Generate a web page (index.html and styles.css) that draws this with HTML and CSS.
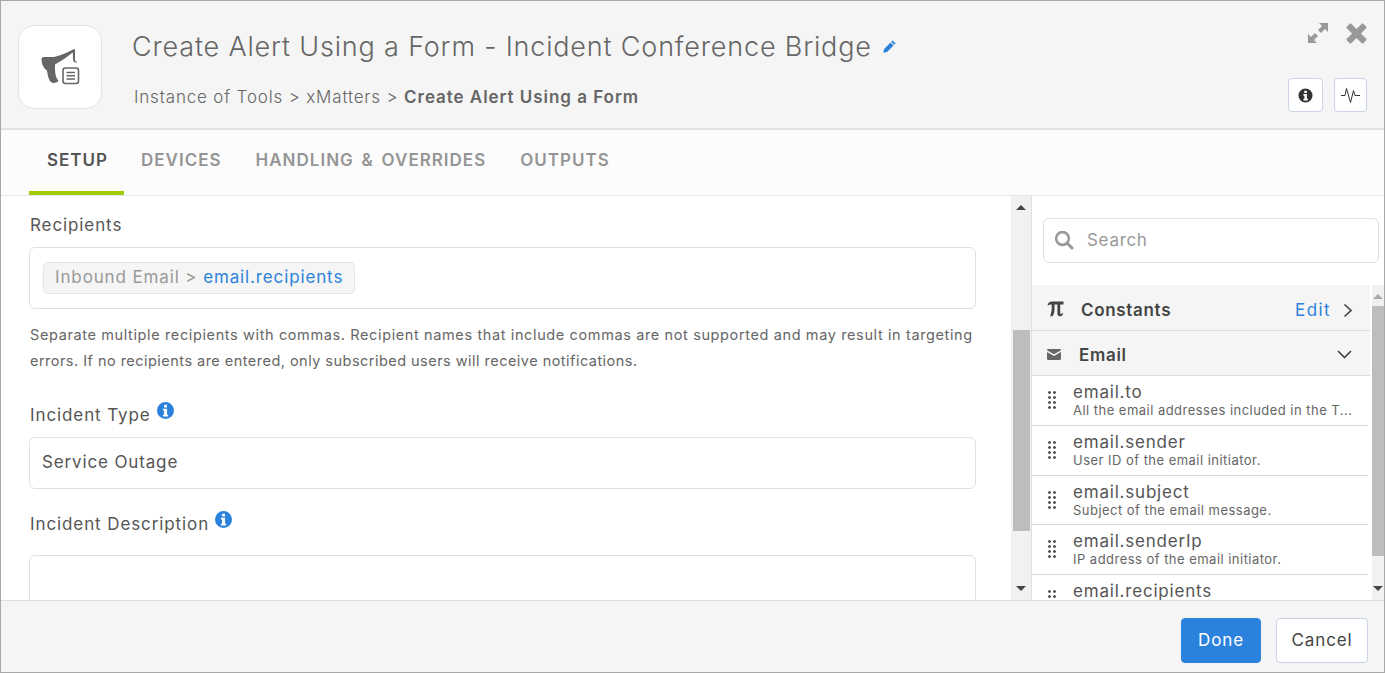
FILE: index.html
```html
<!DOCTYPE html>
<html lang="en">
<head>
<meta charset="utf-8">
<title>Create Alert Using a Form</title>
<link rel="stylesheet" href="styles.css">
</head>
<body>
<div class="dialog">
  <header class="head">
    <div class="logo">
      <svg width="40" height="38" viewBox="0 0 40 38"><path class="ico-dark" d="M.5 10C.5 8.800 1.500 8 3 8H13C20 6 28 3 32.500.2H34V10.500C34 12 35 12.500 36.500 13.500H34.500C33 13.300 32 12 32 10.500L31.800 3.500C27 7 22 11 14 15.500C13.800 23 14.500 29 17.500 31.500C17 33.500 13 34.500 10.500 33.500C8 32 6.500 26 6 21.500C3 20 .5 15 .5 10z"/><rect x="20" y="16.500" width="19" height="20" fill="#fff"/><rect x="22" y="19" width="15.500" height="15.500" rx="2.500" fill="#fff" stroke="#666" stroke-width="1.600"/><path d="M25.500 23.500h8.500M25.500 26.800h8.500M25.500 30h8.500" stroke="#666" stroke-width="1.600"/></svg>
    </div>
    <div class="titles">
      <div class="title-row">
        <h1 class="title">Create Alert Using a Form - Incident Conference Bridge</h1>
        <svg class="pencil" width="13" height="13" viewBox="0 0 13 13"><path class="ico-blue" d="M9.600.4l3 3-1.400 1.400-3-3zM7.500 2.500l3 3-6.500 6.500-3.200.7-.4-.4.700-3.300z"/></svg>
      </div>
      <div class="crumbs">Instance of Tools &gt; xMatters &gt; <b>Create Alert Using a Form</b></div>
    </div>
    <div class="head-right">
      <div class="win-icons">
        <svg width="22" height="22" viewBox="0 0 22 22"><path class="ico-grey" d="M12 1h9v9l-3-3-4 4-3-3 4-4zM1 21v-9l3 3 4-4 3 3-4 4 3 3z"/></svg>
        <svg width="21" height="21" viewBox="0 0 22 22"><path class="ico-grey" d="M5.500.8L11 6.300 16.500.8c.5-.5 1.200-.5 1.700 0l3 3c.5.5.5 1.200 0 1.700L15.700 11l5.500 5.500c.5.500.5 1.200 0 1.700l-3 3c-.5.500-1.200.5-1.700 0L11 15.700l-5.500 5.500c-.5.500-1.200.5-1.700 0l-3-3c-.5-.5-.5-1.200 0-1.700L6.300 11 .8 5.500c-.5-.5-.5-1.200 0-1.700l3-3c.5-.5 1.200-.5 1.700 0z"/></svg>
      </div>
      <div class="tools">
        <button class="tool tool-info"><svg width="15" height="15" viewBox="0 0 16 16"><path class="ico-ink" fill-rule="evenodd" d="M8 .5a7.500 7.500 0 1 0 0 15 7.500 7.500 0 0 0 0-15zM6.700 2.800h2.700v2.400H6.700zM5.800 6.400h3.700v5.100h1v1.800H5.800v-1.800h1v-3.300h-1z"/></svg></button>
        <button class="tool"><svg width="19" height="17" viewBox="0 0 19 17"><path d="M0 8.500h4L5.500 1.500l4 14 3-12 1.500 5h5" fill="none" stroke="#333" stroke-width="1"/></svg></button>
      </div>
    </div>
  </header>

  <nav class="tabs">
    <a class="tab active">SETUP</a>
    <a class="tab">DEVICES</a>
    <a class="tab">HANDLING &amp; OVERRIDES</a>
    <a class="tab">OUTPUTS</a>
  </nav>

  <main class="body">
    <section class="form">
      <label class="label lab-first">Recipients</label>
      <div class="field field-chip"><span class="chip"><span class="chip-path">Inbound Email &gt;</span> <span class="chip-name">email.recipients</span></span></div>
      <p class="help"><span class="help-a">Separate multiple recipients with commas. Recipient names that include commas are not supported and may result in targeting</span> <span class="help-b">errors. If no recipients are entered, only subscribed users will receive notifications.</span></p>
      <label class="label lab-type">Incident Type <svg class="i-info" width="17" height="17" viewBox="0 0 16 16"><path class="ico-blue" fill-rule="evenodd" d="M8 0a8 8 0 1 0 0 16A8 8 0 0 0 8 0zM6.700 2.600h2.700v2.500H6.700zM5.600 6.400h3.900v5.500h1v1.700H5.600v-1.700h1V8.100h-1z"/></svg></label>
      <div class="field field-text">Service Outage</div>
      <label class="label lab-desc">Incident Description <svg class="i-info" width="17" height="17" viewBox="0 0 16 16"><path class="ico-blue" fill-rule="evenodd" d="M8 0a8 8 0 1 0 0 16A8 8 0 0 0 8 0zM6.700 2.600h2.700v2.500H6.700zM5.600 6.400h3.900v5.500h1v1.700H5.600v-1.700h1V8.100h-1z"/></svg></label>
      <div class="field field-area"></div>
    </section>

    <div class="scroll scroll-main">
      <span class="arrow up"></span>
      <span class="track track-a"></span>
      <span class="thumb"></span>
      <span class="track track-b"></span>
      <span class="arrow down"></span>
    </div>

    <aside class="side">
      <div class="search">
        <div class="search-box">
          <svg width="20" height="20" viewBox="0 0 20 20"><circle cx="8.500" cy="8.500" r="6.400" fill="none" stroke="#999" stroke-width="2.600"/><path d="M13 13l5 5" stroke="#999" stroke-width="3" stroke-linecap="round"/></svg>
          <span>Search</span>
        </div>
      </div>
      <div class="side-list">
        <div class="list">
          <div class="group g-const">
            <svg class="pi" width="17" height="17" viewBox="0 0 17 17"><path fill="#444" d="M.5 5.500C1 3 2.500 1.500 5 1.500H16.500V4.500H13.200V12.500C13.200 13.500 13.500 14 14.200 14C14.800 14 15.200 13.600 15.400 13H16.200C16 15 14.900 16.300 13.200 16.300C11.300 16.300 10.400 15.100 10.400 13V4.500H7.500V9C7.500 12.500 6.500 14.800 5.500 16.300H3.200C3 16.300 4.700 12.500 4.700 8V4.500C3 4.500 1.800 4.700 1.300 5.500z"/></svg>
            <strong>Constants</strong>
            <a class="edit">Edit</a>
            <svg width="10" height="15" viewBox="0 0 10 15"><path d="M1.500 1.500l6.500 6-6.500 6" fill="none" stroke="#444" stroke-width="1.700"/></svg>
          </div>
          <div class="group g-email">
            <svg class="env" width="14" height="11" viewBox="0 0 14 11"><path class="ico-dark" d="M0 1.200C0 .5.500 0 1.200 0h11.600c.7 0 1.200.5 1.200 1.200L7 5.200zM0 3l7 4 7-4v6.800c0 .7-.5 1.200-1.200 1.200H1.200C.5 11 0 10.500 0 9.800z"/></svg>
            <strong>Email</strong>
            <svg class="chev" width="15" height="9" viewBox="0 0 15 9"><path d="M1 1l6.500 6.500L14 1" fill="none" stroke="#444" stroke-width="1.600"/></svg>
          </div>
          <div class="item it-a"><span class="grip"></span><div class="it-text"><div class="it-name">email.to</div><div class="it-desc">All the email addresses included in the T...</div></div></div>
          <div class="item it-a"><span class="grip"></span><div class="it-text"><div class="it-name">email.sender</div><div class="it-desc">User ID of the email initiator.</div></div></div>
          <div class="item it-b"><span class="grip"></span><div class="it-text"><div class="it-name">email.subject</div><div class="it-desc">Subject of the email message.</div></div></div>
          <div class="item it-a"><span class="grip"></span><div class="it-text"><div class="it-name">email.senderIp</div><div class="it-desc">IP address of the email initiator.</div></div></div>
          <div class="item it-a"><span class="grip"></span><div class="it-text"><div class="it-name">email.recipients</div></div></div>
        </div>
        <div class="scroll scroll-side">
          <span class="arrow up light"></span>
          <span class="thumb thumb-side"></span>
          <span class="track"></span>
          <span class="arrow down"></span>
        </div>
      </div>
    </aside>
  </main>

  <footer class="foot">
    <button class="btn btn-primary">Done</button>
    <button class="btn btn-plain">Cancel</button>
  </footer>
</div>
</body>
</html>
```
FILE: styles.css
```css
* { box-sizing: border-box; }
html, body { margin: 0; height: 100%; overflow: hidden; }
body { font-family: Inter, "Liberation Sans", sans-serif; color: #555; background: #fff; }
svg { display: block; flex: none; }
.ico-dark { fill: #666; }
.ico-blue { fill: #2b82dc; }
.ico-grey { fill: #999; }
.ico-ink { fill: #333; }

.dialog { width: 1385px; height: 673px; display: flex; flex-direction: column; border: 1px solid #a8a8a8; }

.head { height: 129px; flex: none; display: flex; background: #f5f5f5; border-bottom: 2px solid #e2e2e2; padding: 24px 17px 0 17px; }
.logo { width: 84px; height: 84px; background: #fff; border: 1px solid #e2e2e2; border-radius: 16px; display: flex; align-items: center; justify-content: center; padding: 2px 0 0 2px; }
.titles { flex: 1; padding: 4px 0 0 30px; }
.title-row { display: flex; align-items: center; gap: 11px; height: 36px; }
.title { margin: 0; font-size: 27px; font-weight: 300; line-height: 36px; color: #666; letter-spacing: .82px; white-space: nowrap; }
.pencil { margin-top: -2px; }
.crumbs { margin-top: 20px; margin-left: 2px; font-size: 17px; line-height: 24px; color: #666; white-space: nowrap; font-weight: 300; letter-spacing: .83px; }
.crumbs b { font-weight: 600; letter-spacing: .96px; }
.head-right { display: flex; flex-direction: column; align-items: flex-end; margin-top: -3px; }
.win-icons { display: flex; align-items: center; gap: 17px; }
.tools { display: flex; gap: 11px; margin-top: 34px; }
.tool { width: 35px; height: 34px; padding: 0; background: #fff; border: 1px solid #c9d3e3; border-radius: 4px; display: flex; align-items: center; justify-content: center; }
.tool + .tool { width: 33px; }

.tabs { height: 66px; flex: none; display: flex; padding-left: 28px; background: #fcfcfc; border-bottom: 1px solid #e8e8e8; }
.tab { height: 65px; padding: 0 17px; font-size: 17px; line-height: 60px; font-weight: 600; color: #959595; white-space: nowrap; letter-spacing: 1px; word-spacing: 2.500px; }
.tab.active { padding: 0 16px 0 18px; color: #555; border-bottom: 4px solid #9fcc00; }

.body { flex: 1; min-height: 0; display: flex; overflow: hidden; }
.form { width: 1010px; flex: none; padding: 0 35px 0 28px; overflow: hidden; }
.label { display: flex; align-items: flex-start; gap: 6px; padding-left: 1px; font-size: 17px; line-height: 24px; color: #555; font-weight: 400; white-space: nowrap; letter-spacing: .9px; }
.lab-first { margin-top: 17px; }
.lab-type { margin-top: 29px; }
.lab-desc { margin-top: 23px; }
.i-info { margin-top: -1px; }
.field { background: #fff; border: 1px solid #e0e0e0; border-radius: 6px; }
.field-chip { height: 62px; margin-top: 10px; padding: 14px 13px; }
.chip { display: inline-block; height: 32px; padding: 0 11px; background: #f5f5f5; border: 1px solid #e4e4e4; border-radius: 5px; font-size: 17px; line-height: 29px; letter-spacing: .87px; white-space: nowrap; }
.chip-path { color: #999; }
.chip-name { color: #2b82dc; }
.help { margin: 13px 0 0; padding-left: 1px; font-size: 14.500px; line-height: 26px; color: #666; }
.help-a { letter-spacing: .62px; }
.help-b { letter-spacing: .47px; }
.field-text { height: 52px; margin-top: 10px; padding: 0 12px; font-size: 17px; line-height: 48px; color: #555; letter-spacing: .86px; }
.field-area { height: 120px; margin-top: 19px; }

.scroll { flex: none; display: flex; flex-direction: column; align-items: center; background: #f1f1f1; }
.scroll-main { width: 21px; border-right: 1px solid #e0e0e0; }
.arrow { flex: none; width: 0; height: 0; border-left: 5px solid transparent; border-right: 5px solid transparent; }
.arrow.up { margin: 9px 0 7px; border-bottom: 5px solid #444; }
.arrow.up.light { border-bottom-color: #aaa; margin: 9px 0 7px; }
.arrow.down { margin: 7px 0 9px; border-top: 5px solid #444; }
.track { flex: 1; }
.track-a { flex: none; height: 113px; }
.thumb { flex: none; width: 17px; height: 201px; background: #bdbdbd; }

.side { flex: 1; min-width: 0; display: flex; flex-direction: column; background: #fff; }
.search { flex: none; height: 89px; padding: 22px 5px 0 11px; }
.search-box { height: 45px; padding: 0 0 2px 10px; display: flex; align-items: center; gap: 13px; background: #fff; border: 1px solid #e0e0e0; border-radius: 6px; font-size: 17px; color: #999; letter-spacing: .7px; }
.side-list { flex: 1; min-height: 0; display: flex; }
.list { flex: 1; min-width: 0; overflow: hidden; }
.scroll-side { width: 14px; border-left: 2px solid #fff; }
.thumb-side { width: 12px; height: 250px; }
.group { display: flex; align-items: center; background: #f5f5f5; border-bottom: 1px solid #ddd; font-size: 17px; color: #444; letter-spacing: .68px; }
.group strong { font-weight: 600; }
.g-const { height: 46px; padding: 5px 17px 0 15px; }
.pi { margin-right: 17px; margin-top: -4px; }
.edit { margin-left: auto; margin-right: 12px; color: #2b82dc; font-weight: 400; letter-spacing: 1.400px; }
.g-email { height: 45px; padding: 3px 18px 0 15px; }
.env { margin-right: 18px; margin-top: -1px; }
.chev { margin-left: auto; }
.item { display: flex; align-items: flex-start; padding-left: 16px; margin-right: 2px; border-bottom: 1px solid #d4d4d4; }
.it-a { height: 50px; }
.it-b { height: 49px; }
.grip { width: 8px; height: 18px; margin-top: 15px; flex: none; background-image: radial-gradient(circle at 1.500px 1.500px, #555 1.300px, transparent 1.500px); background-size: 5px 5px; }
.it-text { margin-left: 17px; min-width: 0; padding-top: 6px; }
.it-name { font-size: 17px; line-height: 21px; color: #555; font-weight: 400; white-space: nowrap; letter-spacing: .8px; }
.it-desc { font-size: 13px; line-height: 15px; color: #666; white-space: nowrap; letter-spacing: .47px; }

.foot { height: 72px; flex: none; display: flex; justify-content: flex-end; gap: 15px; padding: 17px 16px 0 0; background: #f5f5f5; border-top: 1px solid #ddd; }
.btn { height: 45px; font-family: inherit; font-size: 17px; border-radius: 4px; padding: 0 0 2px; letter-spacing: .9px; }
.btn-primary { width: 80px; background: #2b82dc; border: 1px solid #2b82dc; color: #fff; }
.btn-plain { width: 92px; background: #fff; border: 1px solid #c9d3e3; color: #444; }
```
